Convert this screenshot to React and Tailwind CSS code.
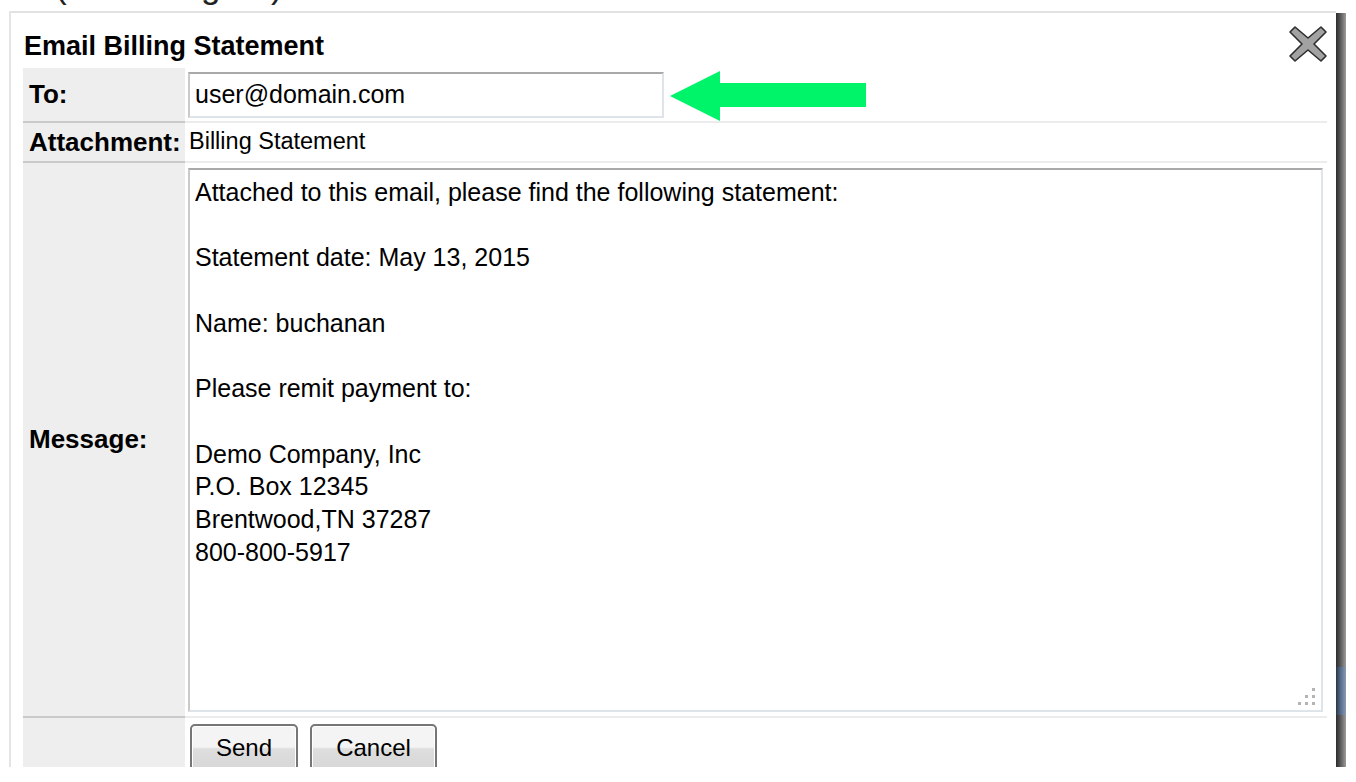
import React from 'react';

const messageLines = [
  'Attached to this email, please find the following statement:',
  '',
  'Statement date: May 13, 2015',
  '',
  'Name: buchanan',
  '',
  'Please remit payment to:',
  '',
  'Demo Company, Inc',
  'P.O. Box 12345',
  'Brentwood,TN 37287',
  '800-800-5917',
];

const CloseIcon = () => (
  <svg width="40" height="40" viewBox="0 0 40 40">
    <path
      d="M7 3 L20 14 L33 3 L38 8 L26 20 L38 32 L33 37 L20 26 L7 37 L2 32 L14 20 L2 8 Z"
      fill="#a2a2a2"
      stroke="#2e2e2e"
      strokeWidth="1.6"
      strokeLinejoin="round"
    />
  </svg>
);

const ResizeGrip = () => (
  <svg width="18" height="18" viewBox="0 0 18 18" className="absolute right-[5px] bottom-[4px]">
    <rect x="14" y="0" width="3" height="3" fill="#b4b4b4" />
    <rect x="7" y="7" width="3" height="3" fill="#b4b4b4" />
    <rect x="14" y="7" width="3" height="3" fill="#b4b4b4" />
    <rect x="0" y="14" width="3" height="3" fill="#b4b4b4" />
    <rect x="7" y="14" width="3" height="3" fill="#b4b4b4" />
    <rect x="14" y="14" width="3" height="3" fill="#b4b4b4" />
  </svg>
);

const Label = ({ children, className = '' }) => (
  <div className={`bg-[#eeeeee] border-b-2 border-[#c9c9c9] pl-[6px] flex items-center font-bold text-[26px] text-black whitespace-nowrap ${className}`}>
    {children}
  </div>
);

const Button = ({ children, className = '' }) => (
  <div
    className={`h-[48px] rounded-[5px] border-2 border-[#767676] shadow-[inset_0_0_0_1px_#ffffff] bg-[linear-gradient(#f4f4f4_48%,#dedede_52%,#d6d6d6)] flex items-center justify-center text-[24px] text-black ${className}`}
  >
    {children}
  </div>
);

export default function App() {
  return (
    <div className="w-[1356px] h-[782px] bg-white overflow-hidden font-['Liberation_Sans',Arial,sans-serif] text-black">
      {/* page text behind the dialog, mostly cut off */}
      <div className="h-[11px] overflow-hidden pl-[55px]">
        <div className="-mt-[32px] text-[35px] leading-none text-[#222] whitespace-nowrap">(bottom figure) is shown here</div>
      </div>

      <div className="flex h-[756px]">
        <div className="ml-[9px] w-[2px] bg-[#e4e4e4]" />

        {/* dialog */}
        <div className="flex-1 flex flex-col border-t-2 border-[#e2e2e2] bg-white pl-[12px] pr-[9px] overflow-hidden">
          <div className="h-[55px] flex justify-between items-start shrink-0">
            <div className="pt-[17px] pl-[1px] leading-[32px] text-[27px] font-bold">Email Billing Statement</div>
            <div className="mt-[11px] -mr-[1px]">
              <CloseIcon />
            </div>
          </div>

          <div className="grid grid-cols-[162px_1fr]">
            {/* To */}
            <Label className="h-[55px]">To:</Label>
            <div className="h-[55px] border-b-2 border-[#ececec] pl-[3px] pt-[4px] flex items-start gap-[6px]">
              <div className="w-[476px] h-[46px] border-2 border-t-[#a9a9a9] border-l-[#cacaca] border-r-[#dfe4ea] border-b-[#dfe4ea] pl-[5px] flex items-center text-[25px]">
                user@domain.com
              </div>
              <svg width="198" height="50" viewBox="0 0 198 50" className="-mt-[1px]">
                <polygon points="0,25 50,0 50,12 196,12 196,36 50,36 50,50" fill="#00f46a" />
              </svg>
            </div>

            {/* Attachment */}
            <Label className="h-[40px]">Attachment:</Label>
            <div className="h-[40px] border-b-2 border-[#ececec] pl-[4px] flex items-center text-[23.5px]">
              Billing Statement
            </div>

            {/* Message */}
            <Label className="h-[555px]">Message:</Label>
            <div className="h-[555px] border-b-2 border-[#ececec] pl-[3px] pr-[4px] pt-[5px] pb-[4px]">
              <div className="relative h-full border-2 border-t-[#a9a9a9] border-l-[#cacaca] border-r-[#dfe4ea] border-b-[#dfe4ea] pl-[5px] pt-[6px] text-[25px] leading-[32.7px]">
                {messageLines.map((line, i) => (
                  <div key={i} className="h-[32.7px] whitespace-pre">{line}</div>
                ))}
                <ResizeGrip />
              </div>
            </div>

            {/* Buttons */}
            <div className="bg-[#eeeeee] h-[60px]" />
            <div className="h-[60px] pl-[5px] pt-[6px] flex gap-[12px]">
              <Button className="w-[108px]">Send</Button>
              <Button className="w-[127px]">Cancel</Button>
            </div>
          </div>
        </div>

        {/* window edge */}
        <div className="w-[10px] flex flex-col pt-[2px]">
          <div className="flex-1 bg-[linear-gradient(to_right,#2c2c2c,#4e4e4e_35%,#9c9c9c)]" />
          <div className="h-[48px] bg-[linear-gradient(to_right,#2c3440,#4f6688_40%,#8a9bb2)]" />
          <div className="h-[52px] bg-[linear-gradient(to_right,#2c2c2c,#4e4e4e_35%,#9c9c9c)]" />
        </div>
        <div className="w-[10px]" />
      </div>
    </div>
  );
}
